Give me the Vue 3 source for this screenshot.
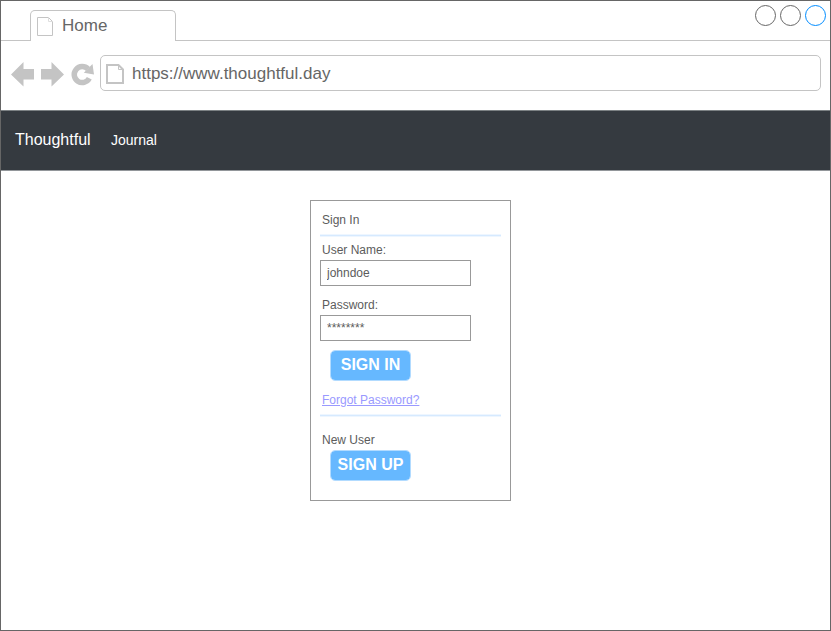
<script setup>
import { ref } from 'vue'

const username = ref('johndoe')
const password = ref('********')
</script>

<template>
  <div class="window">
    <header class="tabs">
      <div class="lead"></div>
      <div class="tab">
        <svg class="tab-icon" width="17" height="20" viewBox="0 0 17 20" fill="none" stroke="#c4c4c4">
          <path d="M.5.5H11.500L15.500 4.500V18.500H.5Z" />
          <path d="M11.500 .5V4.500H15.500" stroke="#dedede" />
        </svg>
        <span class="tab-title">Home</span>
      </div>
      <div class="rest">
        <svg width="72" height="22" viewBox="0 0 72 22" fill="none">
          <circle cx="11.500" cy="11.500" r="10" stroke="#666" />
          <circle cx="36.500" cy="11.500" r="10" stroke="#666" />
          <circle cx="61.500" cy="11.500" r="10" stroke="#008cff" />
        </svg>
      </div>
    </header>

    <div class="toolbar">
      <svg class="nav-icons" width="84" height="30" viewBox="0 0 84 30" fill="#c4c4c4">
        <path d="M0 15.500L12.500 3V10H23V20.500H12.500V27.500Z" />
        <path d="M53 15.500L40.500 3V10H30V20.500H40.500V27.500Z" />
        <path d="M78.300 19.300A8 8 0 1 1 77 10" fill="none" stroke="#c4c4c4" stroke-width="5.500" />
        <path d="M72.800 13.800L81.500 5L83 15.500Z" />
      </svg>
      <div class="address">
        <svg class="page-icon" width="18" height="21" viewBox="0 0 18 21" fill="none" stroke="#c4c4c4">
          <path d="M1 1H12.500L17 5.500V19H1Z" stroke-width="2" />
          <path d="M12.500 1V5.500H17" />
        </svg>
        <span class="url">https://www.thoughtful.day</span>
      </div>
    </div>

    <nav class="navbar">
      <span class="brand">Thoughtful</span>
      <span class="link">Journal</span>
    </nav>

    <main>
      <form class="card" @submit.prevent>
        <div class="title">Sign In</div>
        <div class="rule"></div>
        <label class="first" for="user">User Name:</label>
        <input id="user" v-model="username" type="text" />
        <label class="second" for="pass">Password:</label>
        <input id="pass" v-model="password" class="stars" type="text" />
        <button class="signin" type="submit">SIGN IN</button>
        <a class="forgot">Forgot Password?</a>
        <div class="rule"></div>
        <div class="new">New User</div>
        <button class="signup" type="button">SIGN UP</button>
      </form>
    </main>
  </div>
</template>

<style>
body {
  margin: 0;
  background: #fff;
}
</style>

<style scoped>
* {
  box-sizing: border-box;
}
.window {
  display: flex;
  flex-direction: column;
  width: 831px;
  height: 631px;
  border: 1px solid #666;
  background: #fff;
  color: #666;
  font-family: "Liberation Sans", Arial, sans-serif;
  overflow: hidden;
}
svg {
  display: block;
  flex: none;
}
.tabs {
  display: flex;
  height: 40px;
}
.lead {
  width: 29px;
  border-bottom: 1px solid #c4c4c4;
}
.tab {
  display: flex;
  width: 146px;
  height: 31px;
  margin-top: 9px;
  padding-left: 6px;
  border: 1px solid #c4c4c4;
  border-bottom: 0;
  border-radius: 5px 5px 0 0;
}
.tab-icon {
  margin-top: 6px;
}
.tab-title {
  margin-left: 8px;
  font-size: 17px;
  line-height: 30px;
}
.rest {
  flex: 1;
  display: flex;
  justify-content: flex-end;
  padding: 3px 4px 0 0;
  border-bottom: 1px solid #c4c4c4;
}
.toolbar {
  display: flex;
  height: 69px;
  padding: 14px 9px 0 10px;
}
.nav-icons {
  margin-top: 4px;
}
.address {
  display: flex;
  width: 721px;
  height: 36px;
  margin-left: 5px;
  padding-left: 5px;
  border: 1px solid #c4c4c4;
  border-radius: 5px;
}
.page-icon {
  margin-top: 8px;
}
.url {
  margin-left: 8px;
  font-size: 17px;
  line-height: 36px;
}
.navbar {
  display: flex;
  height: 61px;
  padding-left: 14px;
  border-top: 1px solid #7c8184;
  border-bottom: 1px solid #92969a;
  background: #353a40;
  color: #fff;
  line-height: 58px;
}
.brand {
  width: 96px;
  font-size: 16px;
}
.link {
  font-size: 14px;
}
main {
  flex: 1;
  padding: 29px 0 0 309px;
}
.card {
  display: flex;
  flex-direction: column;
  align-items: flex-start;
  width: 201px;
  height: 301px;
  padding: 0 9px;
  border: 1px solid #999;
  font-size: 12px;
  line-height: 20px;
  color: #5c5c5c;
}
.title {
  margin: 9px 0 4px 2px;
}
.rule {
  width: 181px;
  height: 3px;
  border: solid #eef6ff;
  border-width: 1px 0;
  background: #d6eaff;
}
label {
  margin-left: 2px;
}
.first {
  margin-top: 3px;
}
.second {
  margin-top: 9px;
}
input {
  width: 151px;
  height: 26px;
  padding: 0 6px;
  border: 1px solid #999;
  border-radius: 0;
  outline: 0;
  background: #fff;
  color: #5c5c5c;
  font: 12px "Liberation Sans", Arial, sans-serif;
}
button {
  width: 81px;
  height: 31px;
  margin-left: 10px;
  padding: 0 0 1px;
  border: 1px solid #b2dbff;
  border-radius: 5px;
  background: #66b8ff;
  background-clip: padding-box;
  color: #fff;
  font: bold 16px "Liberation Sans", Arial, sans-serif;
  white-space: nowrap;
}
.signin {
  margin-top: 9px;
}
.forgot {
  margin: 9px 0 4px 2px;
  color: #9999ff;
  text-decoration: underline;
}
.new {
  margin: 13px 0 0 2px;
}
</style>
